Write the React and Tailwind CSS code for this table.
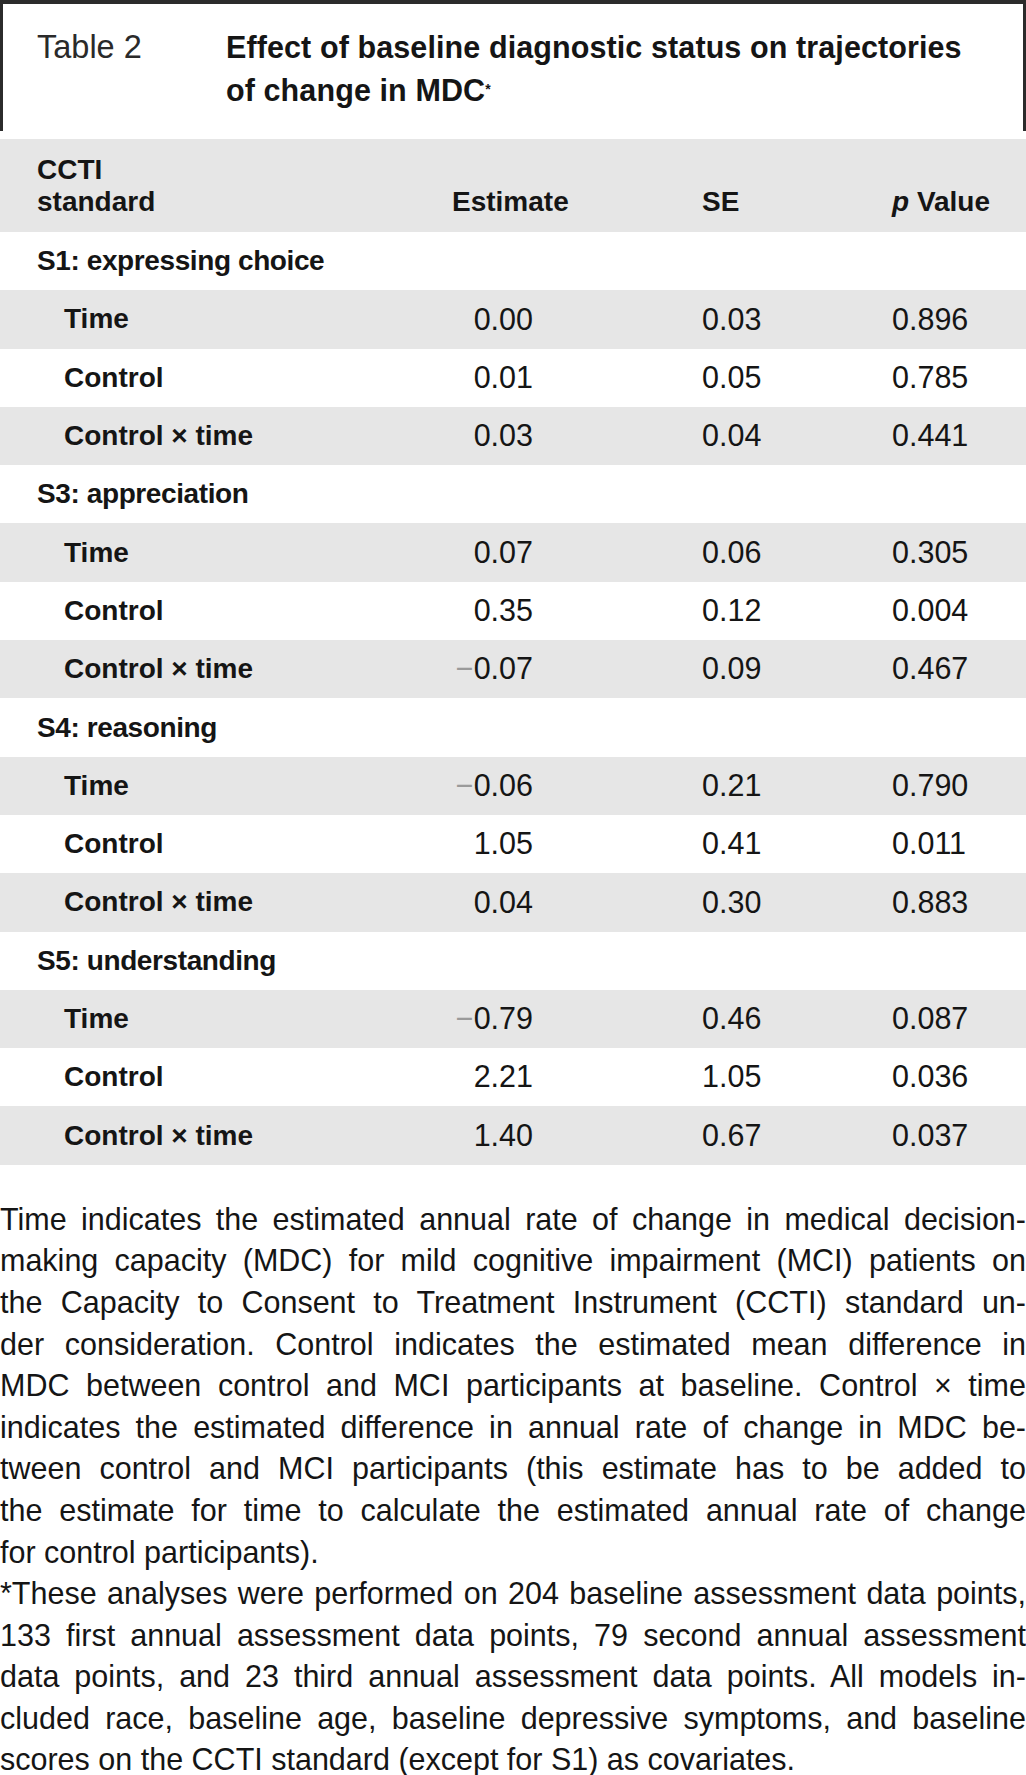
const rows = [
  { section: 'S1: expressing choice' },
  { label: 'Time', est: '0.00', se: '0.03', p: '0.896' },
  { label: 'Control', est: '0.01', se: '0.05', p: '0.785' },
  { label: 'Control × time', est: '0.03', se: '0.04', p: '0.441' },
  { section: 'S3: appreciation' },
  { label: 'Time', est: '0.07', se: '0.06', p: '0.305' },
  { label: 'Control', est: '0.35', se: '0.12', p: '0.004' },
  { label: 'Control × time', est: '−0.07', se: '0.09', p: '0.467' },
  { section: 'S4: reasoning' },
  { label: 'Time', est: '−0.06', se: '0.21', p: '0.790' },
  { label: 'Control', est: '1.05', se: '0.41', p: '0.011' },
  { label: 'Control × time', est: '0.04', se: '0.30', p: '0.883' },
  { section: 'S5: understanding' },
  { label: 'Time', est: '−0.79', se: '0.46', p: '0.087' },
  { label: 'Control', est: '2.21', se: '1.05', p: '0.036' },
  { label: 'Control × time', est: '1.40', se: '0.67', p: '0.037' },
];

const notes = [
  'Time indicates the estimated annual rate of change in medical decision-',
  'making capacity (MDC) for mild cognitive impairment (MCI) patients on',
  'the Capacity to Consent to Treatment Instrument (CCTI) standard un-',
  'der consideration. Control indicates the estimated mean difference in',
  'MDC between control and MCI participants at baseline. Control × time',
  'indicates the estimated difference in annual rate of change in MDC be-',
  'tween control and MCI participants (this estimate has to be added to',
  'the estimate for time to calculate the estimated annual rate of change',
];

const star = [
  '*These analyses were performed on 204 baseline assessment data points,',
  '133 first annual assessment data points, 79 second annual assessment',
  'data points, and 23 third annual assessment data points. All models in-',
  'cluded race, baseline age, baseline depressive symptoms, and baseline',
];

function Estimate({ value }) {
  if (value.startsWith('−')) {
    return (
      <>
        <span className="text-[#9a9a9a]">−</span>
        {value.slice(1)}
      </>
    );
  }
  return value;
}

export default function App() {
  return (
    <div className="w-[1026px] bg-white text-[#151515] font-['Liberation_Sans',Arial,sans-serif]">
      <div className="h-[131px] border-t-[4px] border-l-[3px] border-r-[3px] border-[#2b2b2b] flex pt-[22px] pl-[34px]">
        <div className="w-[189px] text-[32.5px] leading-[43px] text-[#2a2a2a]">Table 2</div>
        <div className="text-[30.5px] leading-[43px] font-bold tracking-[0.1px]">
          Effect of baseline diagnostic status on trajectories
          <br />
          of change in MDC<sup className="text-[14px]">*</sup>
        </div>
      </div>

      <div className="mt-[8px] text-[30.5px]">
        <div className="flex items-end h-[93px] pb-[14px] bg-[#e6e6e6] font-bold text-[28px] leading-[32px]">
          <div className="w-[452px] pl-[37px]">
            CCTI
            <br />
            standard
          </div>
          <div className="w-[250px]">Estimate</div>
          <div className="w-[190px]">SE</div>
          <div>
            <span className="italic">p</span> Value
          </div>
        </div>
        {rows.map((r, i) =>
          r.section ? (
            <div key={i} className={`flex items-center h-[58.3px] font-bold text-[28px] tracking-[-0.4px] ${i % 2 === 0 ? 'bg-white' : 'bg-[#e6e6e6]'}`}>
              <div className="pl-[37px]">{r.section}</div>
            </div>
          ) : (
            <div key={i} className={`flex items-center h-[58.3px] ${i % 2 === 0 ? 'bg-white' : 'bg-[#e6e6e6]'}`}>
              <div className="w-[452px] pl-[64px] font-bold text-[28px]">{r.label}</div>
              <div className="w-[250px]">
                <div className="w-[81px] text-right">
                  <Estimate value={r.est} />
                </div>
              </div>
              <div className="w-[190px]">{r.se}</div>
              <div>{r.p}</div>
            </div>
          )
        )}
      </div>

      <div className="mt-[34px] text-[30.5px] leading-[41.6px] whitespace-nowrap">
        {notes.map((line, i) => (
          <div key={i} className="text-justify [text-align-last:justify]">{line}</div>
        ))}
        <div>for control participants).</div>
        {star.map((line, i) => (
          <div key={i} className="text-justify [text-align-last:justify]">{line}</div>
        ))}
        <div>scores on the CCTI standard (except for S1) as covariates.</div>
      </div>
    </div>
  );
}
